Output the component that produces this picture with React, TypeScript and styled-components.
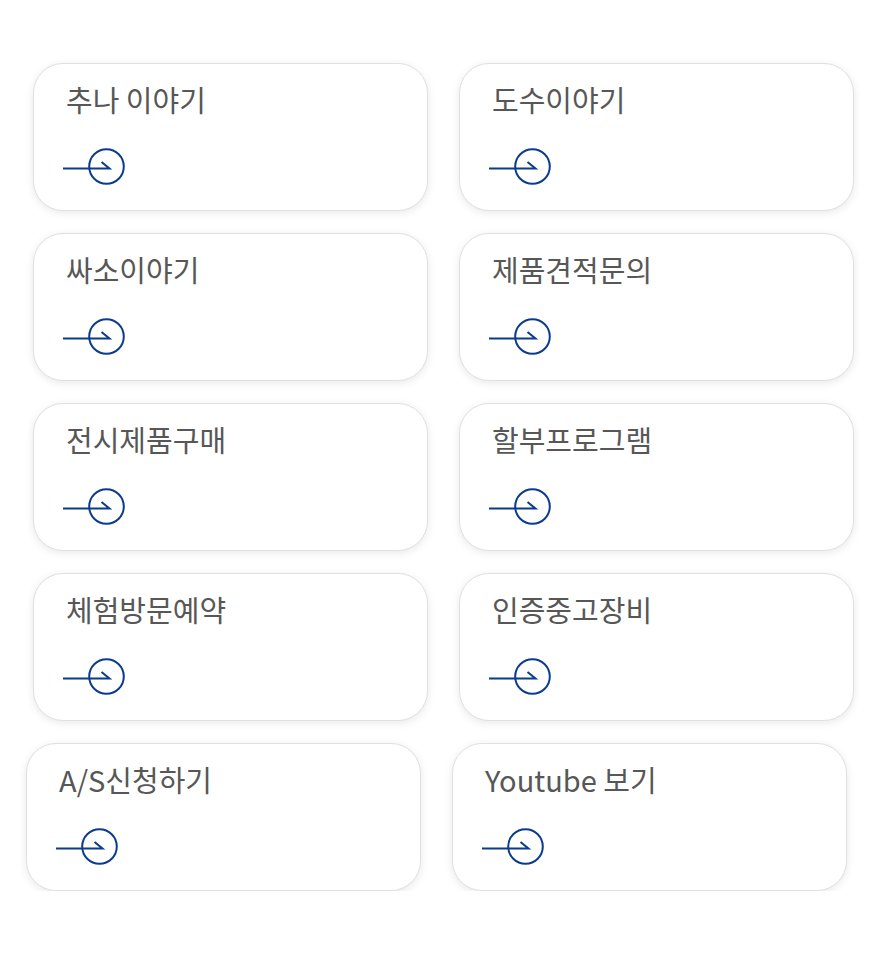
import React from 'react';
import styled, { createGlobalStyle } from 'styled-components';

const GlobalStyle = createGlobalStyle`
    html, body {
        margin: 0;
        padding: 0;
        background: #fff;
        font-family: "Noto Sans CJK KR", "Noto Sans", sans-serif;
    }
`;

const Page = styled.div`
    width: 870px;
    padding-top: 63px;
    display: flex;
    flex-direction: column;
    gap: 22px;
`;

const Grid = styled.div<{ $left: number }>`
    display: grid;
    grid-template-columns: 395px 395px;
    column-gap: 31px;
    row-gap: 22px;
    padding-left: ${p => p.$left}px;
`;

const Card = styled.a`
    display: flex;
    flex-direction: column;
    box-sizing: border-box;
    height: 148px;
    padding: 15px 0 0 32px;
    border-radius: 30px;
    border: 1px solid #e0e0e0;
    background: #fff;
    box-shadow: 0 2px 8px rgba(0, 0, 0, 0.09);
    text-decoration: none;
    cursor: pointer;
`;

const Title = styled.div`
    font-size: 29px;
    font-weight: 400;
    line-height: 40px;
    color: #575757;
`;

const Icon = styled.svg`
    display: block;
    margin: 28px 0 0 -3px;
`;

const Arrow = () => (
    <Icon width="66" height="40" viewBox="0 0 66 40" fill="none">
        <circle cx="43.5" cy="19.5" r="17.3" stroke="#0b3b8c" strokeWidth="2" />
        <path d="M0 21.5 H46.5 L38.5 15" stroke="#0b3b8c" strokeWidth="2" />
    </Icon>
);

const rows = [
    ['추나 이야기', '도수이야기'],
    ['싸소이야기', '제품견적문의'],
    ['전시제품구매', '할부프로그램'],
    ['체험방문예약', '인증중고장비'],
];

const last = ['A/S신청하기', 'Youtube 보기'];

const App = () => (
    <>
        <GlobalStyle />
        <Page>
            <Grid $left={33}>
                {rows.flat().map((t, i) => (
                    <Card key={i}>
                        <Title>{t}</Title>
                        <Arrow />
                    </Card>
                ))}
            </Grid>
            <Grid $left={26}>
                {last.map((t, i) => (
                    <Card key={i}>
                        <Title>{t}</Title>
                        <Arrow />
                    </Card>
                ))}
            </Grid>
        </Page>
    </>
);

export default App;
